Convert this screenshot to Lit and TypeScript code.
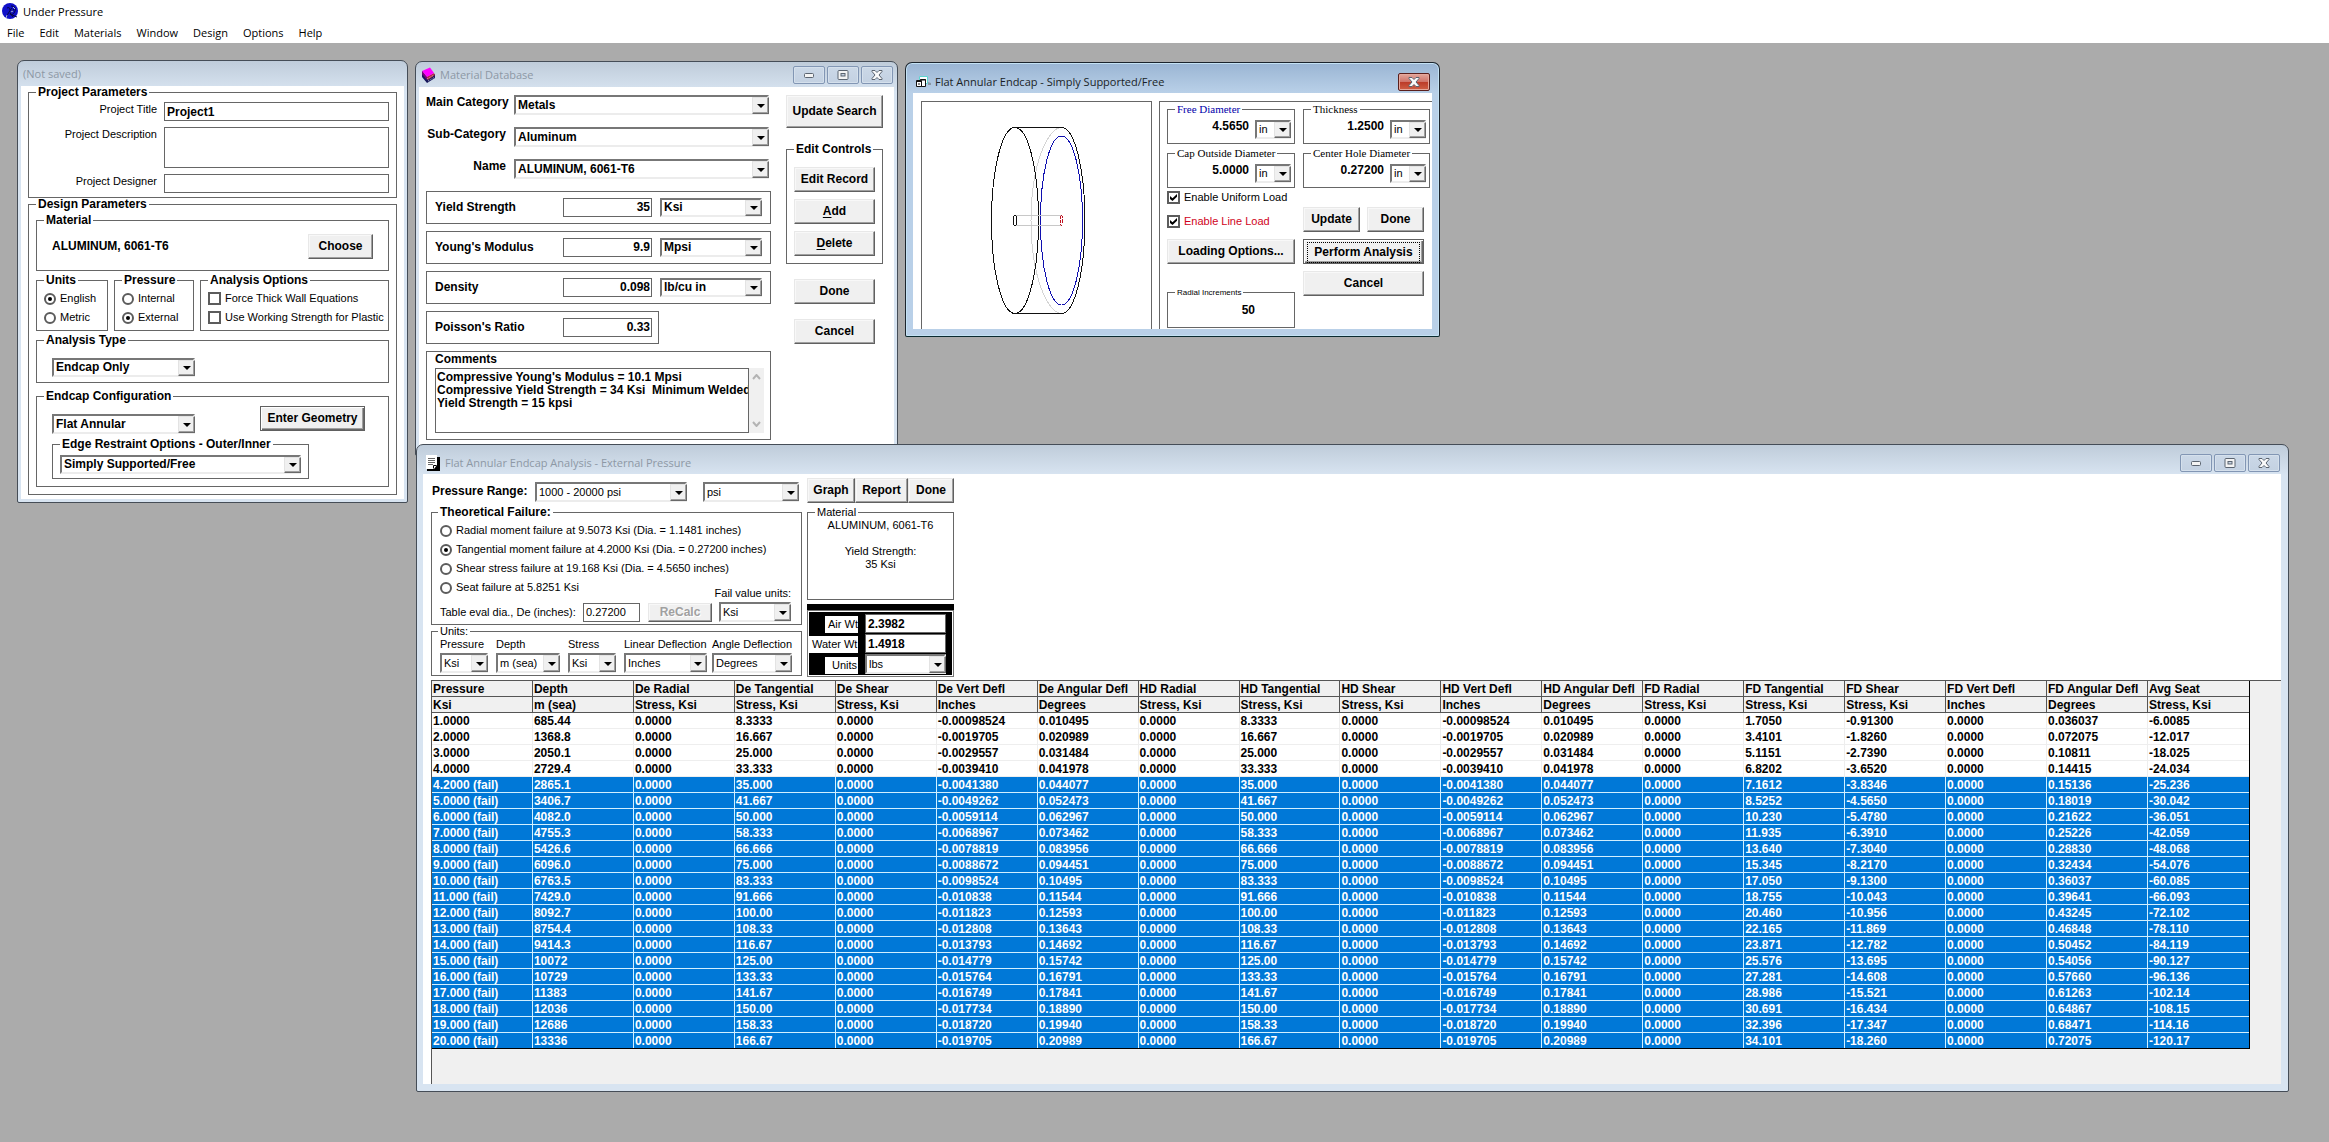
import { LitElement, html, css, svg, nothing } from "lit";
import { customElement } from "lit/decorators.js";
import { classMap } from "lit/directives/class-map.js";

/* ---------- shared look of the controls ---------- */

const controls = css`
  :host {
    display: block;
    font: 11px/13px "Liberation Sans", Arial, sans-serif;
    color: #000;
    cursor: default;
  }
  * { box-sizing: border-box; }
  .bold { font-weight: bold; font-size: 12px; }
  label, legend, .text { white-space: nowrap; }

  .win {
    border: 1px solid #454d57;
    border-radius: 7px 7px 2px 2px;
    background: linear-gradient(#bfccda, #d8e4f1 30px);
    padding: 0 3px 3px;
    overflow: hidden;
  }
  .body { background: #fff; }
  .bar {
    display: flex;
    align-items: center;
    gap: 4px;
    height: 25px;
    padding: 0 1px 0 2px;
    font: 11px/16px "Open Sans", "Noto Sans", sans-serif;
    color: #8d98a5;
    white-space: nowrap;
  }
  .bar .icon { display: block; width: 15px; height: 16px; flex: none; }
  .bar .name { flex: 1; }
  .sys { display: flex; gap: 2px; }
  .sys button {
    display: grid;
    place-items: center;
    width: 32px;
    height: 18px;
    padding: 0;
    border: 1px solid #8296b4;
    border-radius: 2px;
    background: linear-gradient(#cbd8e7, #c3d1e2);
    box-shadow: inset 0 0 0 1px #d5e0ec;
  }
  .sys svg { display: block; }
  .sys .close-red {
    border-color: #5a1f1c;
    background: linear-gradient(#e3a79c, #d0746a 48%, #bb3a28 50%, #cf6046);
    box-shadow: inset 0 0 0 1px #e6a89c;
  }

  fieldset {
    min-width: 0;
    margin: 0;
    padding: 0 7px;
    border: 1px solid #666;
  }
  legend {
    height: 13px;
    margin: 0;
    padding: 0 2px;
    font-weight: bold;
    font-size: 12px;
    line-height: 13px;
  }
  legend.light { font-weight: normal; font-size: 11px; }
  legend.serif {
    font: 11px/13px "Liberation Serif", "Times New Roman", serif;
  }
  legend.tiny { font-weight: normal; font-size: 8px; }
  legend.blue { color: #00a; }

  input.box, textarea {
    display: block;
    width: 100%;
    min-width: 0;
    height: 19px;
    margin: 0;
    padding: 0 2px;
    border: 1px solid #666;
    border-radius: 0;
    background: #fff;
    color: #000;
    font: bold 12px/13px "Liberation Sans", Arial, sans-serif;
    outline: none;
    resize: none;
    overflow: hidden;
  }
  input.light { font-weight: normal; font-size: 11px; }
  input.right { text-align: right; padding: 0 1px 2px; }
  input.bare { border: 0; height: 13px; padding: 0; text-align: right; }

  .combo { display: grid; position: relative; height: 20px; }
  .combo select {
    appearance: none;
    width: 100%;
    height: 100%;
    margin: 0;
    padding: 0 18px 0 2px;
    border: 2px solid;
    border-color: #777 #ececec #ececec #777;
    border-radius: 0;
    background: #fff;
    color: #000;
    font: 11px/13px "Liberation Sans", Arial, sans-serif;
    outline: none;
  }
  .combo.strong select { font-weight: bold; font-size: 12px; }
  .combo .drop {
    position: absolute;
    top: 2px;
    right: 0;
    bottom: 1px;
    width: 17px;
    display: grid;
    place-items: center;
    background: #f0f0f0;
    border: 1px solid;
    border-color: #e3e3e3 #696969 #696969 #e3e3e3;
    box-shadow: inset -1px -1px 0 #a0a0a0;
    pointer-events: none;
  }
  .combo .drop::before {
    content: "";
    border: solid transparent;
    border-width: 4px 4px 0;
    border-top-color: #000;
  }

  button.push {
    height: 25px;
    padding: 0 2px;
    border: 1px solid;
    border-color: #e8e8e8 #606060 #606060 #e8e8e8;
    border-radius: 0;
    background: #f0f0f0;
    box-shadow: inset -1px -1px 0 #a0a0a0, inset 1px 1px 0 #f8f8f8;
    color: #000;
    font: bold 12px/13px "Liberation Sans", Arial, sans-serif;
    white-space: nowrap;
  }
  button.default {
    border-color: #606060;
    box-shadow: inset 1px 1px 0 #fff, inset -1px -1px 0 #696969, inset -2px -2px 0 #a0a0a0;
  }
  button.focused { padding: 2px 3px; }
  button.focused span { display: block; margin: 0; padding: 3px 0; border: 1px dotted #000; }
  button:disabled { color: #a0a0a0; text-shadow: 1px 1px 0 #fff; }
  u { text-underline-offset: 2px; }

  .choice { display: flex; align-items: center; height: 19px; gap: 4px; }
  .choice input {
    appearance: none;
    display: grid;
    place-items: center;
    flex: none;
    width: 12px;
    height: 12px;
    margin: 0;
    border: 2px solid #5c5c5c;
    background: #fff;
  }
  .choice input[type="radio"] { border-radius: 50%; }
  .choice input[type="checkbox"] { width: 13px; height: 13px; }
  .choice input[type="radio"]:checked::before {
    content: "";
    width: 4px;
    height: 4px;
    border-radius: 50%;
    background: #000;
  }
  .choice input[type="checkbox"]:checked::before {
    content: "";
    width: 7px;
    height: 7px;
    background: #000;
    clip-path: polygon(0 30%, 36% 62%, 100% 0, 100% 40%, 36% 100%, 0 70%);
  }
  .red { color: #d0021b; }
`;

/* ---------- small builders ---------- */

const combo = (id: string, value: string, label: string, strong = false) => html`
  <span class=${classMap({ combo: true, strong })}>
    <select id=${id} aria-label=${label || nothing}><option>${value}</option></select>
    <span class="drop"></span>
  </span>`;

const choice = (type: string, name: string, text: string, checked = false, tone = "") => html`
  <label class="choice ${tone}"><input type=${type} name=${name} .checked=${checked} />${text}</label>`;

const minGlyph = html`<svg width="12" height="12" viewBox="0 0 12 12">
  <rect x="1.500" y="4.500" width="9" height="4" rx="1" fill="#f4f4f4" stroke="#5b6470" /></svg>`;
const maxGlyph = html`<svg width="12" height="12" viewBox="0 0 12 12">
  <rect x="1" y="1.500" width="10" height="9" rx="1" fill="#f4f4f4" stroke="#5b6470" />
  <rect x="4" y="4.500" width="4" height="2.500" fill="#c6d2e2" stroke="#5b6470" /></svg>`;
const closeGlyph = html`<svg width="12" height="12" viewBox="0 0 12 12">
  <path d="M1 1.500h3l2 2 2-2h3v1L8 6l3 3.500v1H8l-2-2-2 2H1v-1L4 6 1 2.500z" fill="#fafafa" stroke="#5b6470" stroke-linejoin="round" /></svg>`;

const systemButtons = html`<span class="sys">
  <button aria-label="Minimize">${minGlyph}</button>
  <button aria-label="Maximize">${maxGlyph}</button>
  <button aria-label="Close">${closeGlyph}</button>
</span>`;

/* ---------- project window ---------- */

@customElement("project-window")
class ProjectWindow extends LitElement {
  static styles = [controls, css`
    .body { padding: 0 7px 4px; }
    .project { display: grid; grid-template-columns: 1fr 225px; gap: 6px 7px; padding: 3px 0 4px; }
    .project label { text-align: right; line-height: 15px; }
    .project textarea { height: 41px; }
    .design { padding: 3px 7px 7px; }
    .material { display: flex; align-items: center; justify-content: space-between; padding: 7px 8px 11px; }
    .material button { width: 65px; }
    .trio { display: grid; grid-template-columns: 72px 80px 1fr; gap: 6px; margin: 3px 0; }
    .trio fieldset { padding: 2px 7px 3px; }
    .analysis { padding: 11px 7px 5px; }
    .narrow { width: 143px; }
    .analysis .narrow { margin-left: 8px; }
    .analysis .combo { height: 19px; }
    .config { margin-top: 7px; padding: 3px 7px 7px; }
    .line { display: flex; justify-content: space-between; align-items: flex-end; height: 28px; padding: 0 16px 0 8px; }
    .line button { width: 105px; align-self: flex-start; }
    .edge { width: 257px; margin: 4px 0 0 8px; padding: 4px 7px; }
    .edge .combo { height: 19px; }
  `];
  render() {
    return html`<section class="win">
      <div class="bar"><span class="name">(Not saved)</span></div>
      <div class="body">
        <fieldset><legend>Project Parameters</legend>
          <div class="project">
            <label for="title">Project Title</label><input id="title" class="box" value="Project1" />
            <label for="desc">Project Description</label><textarea id="desc"></textarea>
            <label for="designer">Project Designer</label><input id="designer" class="box" />
          </div>
        </fieldset>
        <fieldset class="design"><legend>Design Parameters</legend>
          <fieldset><legend>Material</legend>
            <div class="material"><span class="bold text">ALUMINUM, 6061-T6</span><button class="push">Choose</button></div>
          </fieldset>
          <div class="trio">
            <fieldset><legend>Units</legend>
              ${choice("radio", "units", "English", true)}${choice("radio", "units", "Metric")}
            </fieldset>
            <fieldset><legend>Pressure</legend>
              ${choice("radio", "side", "Internal")}${choice("radio", "side", "External", true)}
            </fieldset>
            <fieldset><legend>Analysis Options</legend>
              ${choice("checkbox", "thick", "Force Thick Wall Equations")}
              ${choice("checkbox", "working", "Use Working Strength for Plastic")}
            </fieldset>
          </div>
          <fieldset class="analysis"><legend>Analysis Type</legend>
            <div class="narrow">${combo("type", "Endcap Only", "Analysis Type", true)}</div>
          </fieldset>
          <fieldset class="config"><legend>Endcap Configuration</legend>
            <div class="line"><div class="narrow">${combo("config", "Flat Annular", "Endcap Configuration", true)}</div>
              <button class="push default">Enter Geometry</button></div>
            <fieldset class="edge"><legend>Edge Restraint Options - Outer/Inner</legend>
              ${combo("edge", "Simply Supported/Free", "Edge Restraint Options", true)}
            </fieldset>
          </fieldset>
        </fieldset>
      </div>
    </section>`;
  }
}

/* ---------- material database ---------- */

@customElement("material-window")
class MaterialWindow extends LitElement {
  static styles = [controls, css`
    .body { display: grid; grid-template-columns: minmax(0, 1fr) 97px; gap: 15px; padding: 8px 11px 12px 7px; }
    .lookup { display: grid; grid-template-columns: minmax(0, 1fr) 255px; gap: 12px 8px; padding-right: 2px; margin-bottom: 12px; }
    .lookup label { text-align: right; line-height: 15px; }
    .prop {
      display: grid;
      grid-template-columns: minmax(0, 1fr) 89px 102px;
      align-items: center;
      gap: 8px;
      height: 33px;
      margin-bottom: 7px;
      padding: 0 8px;
      border: 1px solid #666;
    }
    .prop.short { grid-template-columns: minmax(0, 1fr) 89px; width: 233px; padding-right: 6px; }
    .prop .combo { height: 19px; }
    .notes { padding: 1px 6px 6px 8px; border: 1px solid #666; }
    .area { display: flex; margin-top: 2px; }
    .area textarea { flex: 1; height: 65px; padding: 2px 0 2px 1px; white-space: pre; }
    .scroll { display: flex; flex: none; flex-direction: column; justify-content: space-between; align-items: center; width: 15px; padding: 6px 0; background: #f0f0f0; }
    .side { display: flex; flex-direction: column; gap: 15px; }
    .side > .push { margin: 0 8px; }
    .side > .wide { margin: 0; height: 33px; }
    .edit { display: grid; gap: 7px; padding: 11px 0 7px; }
  `];
  render() {
    const props = [
      ["yield", "Yield Strength", "35", "Ksi"],
      ["young", "Young's Modulus", "9.9", "Mpsi"],
      ["density", "Density", "0.098", "lb/cu in"],
    ];
    const lookups = [
      ["main", "Main Category", "Metals"],
      ["sub", "Sub-Category", "Aluminum"],
      ["name", "Name", "ALUMINUM, 6061-T6"],
    ];
    return html`<section class="win">
      <div class="bar">
        <svg class="icon" viewBox="0 0 15 16">
          <path d="M1 4v6l5 6 8-5V7L6 11z" fill="#15155a" />
          <path d="M5 10l8-4 1 2-7 5z" fill="#b02848" />
          <path d="M6 12l7-4M7 14l7-4" stroke="#e8e0e0" stroke-width=".7" stroke-dasharray="1 1" />
          <path d="M1 4l8-3.500L13 6l-7 4z" fill="#f0f" />
          <path d="M1 4l5 6v3L1 7z" fill="#7a0078" />
        </svg>
        <span class="name">Material Database</span>${systemButtons}
      </div>
      <div class="body">
        <div>
          <div class="lookup">
            ${lookups.map(([id, label, value]) => html`<label class="bold" for=${id}>${label}</label>${combo(id, value, "", true)}`)}
          </div>
          ${props.map(([id, label, value, unit]) => html`<div class="prop">
            <label class="bold" for=${id}>${label}</label>
            <input id=${id} class="box right" value=${value} />${combo(id + "-unit", unit, label + " units", true)}
          </div>`)}
          <div class="prop short"><label class="bold" for="poisson">Poisson's Ratio</label><input id="poisson" class="box right" value="0.33" /></div>
          <div class="notes"><label class="bold" for="comments">Comments</label>
            <div class="area">
              <textarea id="comments" .value=${"Compressive Young's Modulus = 10.1 Mpsi\nCompressive Yield Strength = 34 Ksi  Minimum Welded\nYield Strength = 15 kpsi"}></textarea>
              <span class="scroll">
                <svg width="9" height="6" viewBox="0 0 9 6"><path d="M1 5l3.500-4L8 5" fill="none" stroke="#b4b4b4" stroke-width="2" /></svg>
                <svg width="9" height="6" viewBox="0 0 9 6"><path d="M1 1l3.500 4L8 1" fill="none" stroke="#b4b4b4" stroke-width="2" /></svg>
              </span>
            </div>
          </div>
        </div>
        <div class="side">
          <button class="push wide">Update Search</button>
          <fieldset><legend>Edit Controls</legend>
            <div class="edit">
              <button class="push">Edit Record</button>
              <button class="push"><u>A</u>dd</button>
              <button class="push"><u>D</u>elete</button>
            </div>
          </fieldset>
          <button class="push">Done</button>
          <button class="push">Cancel</button>
        </div>
      </div>
    </section>`;
  }
}

/* ---------- endcap geometry ---------- */

@customElement("endcap-window")
class EndcapWindow extends LitElement {
  static styles = [controls, css`
    .win {
      padding: 0 7px 7px;
      border-color: #1c242c;
      border-bottom-color: #0a2a30;
      background: linear-gradient(#9ab5d3, #b9d0e8 30px);
      box-shadow: inset 0 0 0 1px #c4e2f4;
    }
    .bar { height: 30px; padding: 8px 2px 0 3px; color: #1a1f26; }
    .bar .sys svg { width: 12px; height: 12px; }
    .body { display: grid; grid-template-columns: 231px 1fr; gap: 7px; height: 236px; padding: 8px 0 0 8px; overflow: hidden; }
    .view { border: solid #666; border-width: 1px 1px 0; }
    .view svg { display: block; }
    .panel { display: grid; grid-template-columns: 128px 127px; align-content: start; align-items: start; gap: 8px; padding: 1px 0 0 7px; border: solid #666; border-width: 1px 0 0 1px; }
    .col { display: flex; flex-direction: column; }
    .dim { margin-bottom: 3px; padding: 4px 3px; }
    .dim legend { margin-left: 4px; }
    .dim-row { display: grid; grid-template-columns: 1fr 36px; gap: 6px; }
    .dim .combo { height: 19px; }
    .dim .combo select { padding-right: 16px; }
    .checks { display: grid; gap: 5px; margin: -3px 0 8px; }
    .radial { height: 42px; margin-top: 22px; }
    .radial .bare { width: 80px; margin-top: 5px; }
    .actions { display: grid; grid-template-columns: 57px 57px; gap: 7px; padding-top: 16px; }
    .actions .wide { grid-column: span 2; }
  `];
  private dim(id: string, label: string, value: string, tone = "") {
    return html`<fieldset class="dim"><legend class="serif ${tone}">${label}</legend>
      <div class="dim-row"><input class="box bare" aria-label=${label} .value=${value} />${combo(id, "in", label + " units")}</div>
    </fieldset>`;
  }
  render() {
    return html`<section class="win">
      <div class="bar">
        <svg class="icon" viewBox="0 0 15 16">
          <path d="M3.500 2.500h8v7h-8z" fill="#fff" stroke="#5fd6d0" />
          <path d="M12 8l3 1v2h-3z" fill="#8a97a5" />
          <path d="M4.500 5.500h5v7h-5z" fill="#fff" stroke="#111" />
          <path d="M.5 6.500h5v6h-5z" fill="#fff" stroke="#111" />
          <path d="M0 7.500h6M4 6h6M2 10h2" stroke="#111" />
        </svg>
        <span class="name">Flat Annular Endcap - Simply Supported/Free</span>
        <span class="sys"><button class="close-red" aria-label="Close">${closeGlyph}</button></span>
      </div>
      <div class="body">
        <div class="view">
          <svg width="229" height="227" viewBox="0 0 229 227" fill="none" shape-rendering="crispEdges">
            ${svg`
              <path d="M139.500 25.500C126 25.500 109 62 109 118.500S126 211.500 139.500 211.500" stroke="#d4d4d4" />
              <ellipse cx="93" cy="118.500" rx="23.500" ry="93" stroke="#111" />
              <path d="M93 25.500h46.500a23.500 93 0 0 1 0 186H93" stroke="#111" />
              <ellipse cx="139.500" cy="118.500" rx="21" ry="84.500" stroke="#1010b0" />
              <path d="M93 113.500h46.500M93 123.500h46.500" stroke="#c8c8c8" />
              <ellipse cx="93" cy="118.500" rx="1.500" ry="5" stroke="#111" />
              <ellipse cx="139.500" cy="118.500" rx="1.500" ry="5" stroke="#c01020" stroke-dasharray="3 1" />
            `}
          </svg>
        </div>
        <div class="panel">
          <div class="col">
            ${this.dim("free", "Free Diameter", "4.5650", "blue")}
            ${this.dim("outside", "Cap Outside Diameter", "5.0000")}
            <div class="checks">
              ${choice("checkbox", "uniform", "Enable Uniform Load", true)}
              ${choice("checkbox", "line", "Enable Line Load", true, "red")}
            </div>
            <button class="push">Loading Options...</button>
            <fieldset class="radial"><legend class="tiny">Radial Increments</legend>
              <input class="box bare" aria-label="Radial Increments" value="50" />
            </fieldset>
          </div>
          <div class="col">
            ${this.dim("thick", "Thickness", "1.2500")}
            ${this.dim("hole", "Center Hole Diameter", "0.27200")}
            <div class="actions">
              <button class="push">Update</button><button class="push">Done</button>
              <button class="push default focused wide"><span>Perform Analysis</span></button>
              <button class="push wide">Cancel</button>
            </div>
          </div>
        </div>
      </div>
    </section>`;
  }
}

/* ---------- analysis results ---------- */

const HEADS = [
  ["Pressure", "Ksi"], ["Depth", "m (sea)"],
  ...["De", "HD", "FD"].flatMap((p) => [
    [p + " Radial", "Stress, Ksi"], [p + " Tangential", "Stress, Ksi"], [p + " Shear", "Stress, Ksi"],
    [p + " Vert Defl", "Inches"], [p + " Angular Defl", "Degrees"],
  ]),
  ["Avg Seat", "Stress, Ksi"],
];

/* pressure, depth, tangential, vertical, angular, FD tangential, FD shear, FD angular, seat */
const RESULTS = `
1.0000|685.44|8.3333|-0.00098524|0.010495|1.7050|-0.91300|0.036037|-6.0085
2.0000|1368.8|16.667|-0.0019705|0.020989|3.4101|-1.8260|0.072075|-12.017
3.0000|2050.1|25.000|-0.0029557|0.031484|5.1151|-2.7390|0.10811|-18.025
4.0000|2729.4|33.333|-0.0039410|0.041978|6.8202|-3.6520|0.14415|-24.034
4.2000|2865.1|35.000|-0.0041380|0.044077|7.1612|-3.8346|0.15136|-25.236
5.0000|3406.7|41.667|-0.0049262|0.052473|8.5252|-4.5650|0.18019|-30.042
6.0000|4082.0|50.000|-0.0059114|0.062967|10.230|-5.4780|0.21622|-36.051
7.0000|4755.3|58.333|-0.0068967|0.073462|11.935|-6.3910|0.25226|-42.059
8.0000|5426.6|66.666|-0.0078819|0.083956|13.640|-7.3040|0.28830|-48.068
9.0000|6096.0|75.000|-0.0088672|0.094451|15.345|-8.2170|0.32434|-54.076
10.000|6763.5|83.333|-0.0098524|0.10495|17.050|-9.1300|0.36037|-60.085
11.000|7429.0|91.666|-0.010838|0.11544|18.755|-10.043|0.39641|-66.093
12.000|8092.7|100.00|-0.011823|0.12593|20.460|-10.956|0.43245|-72.102
13.000|8754.4|108.33|-0.012808|0.13643|22.165|-11.869|0.46848|-78.110
14.000|9414.3|116.67|-0.013793|0.14692|23.871|-12.782|0.50452|-84.119
15.000|10072|125.00|-0.014779|0.15742|25.576|-13.695|0.54056|-90.127
16.000|10729|133.33|-0.015764|0.16791|27.281|-14.608|0.57660|-96.136
17.000|11383|141.67|-0.016749|0.17841|28.986|-15.521|0.61263|-102.14
18.000|12036|150.00|-0.017734|0.18890|30.691|-16.434|0.64867|-108.15
19.000|12686|158.33|-0.018720|0.19940|32.396|-17.347|0.68471|-114.16
20.000|13336|166.67|-0.019705|0.20989|34.101|-18.260|0.72075|-120.17
`.trim().split("\n").map((line) => line.split("|"));

const FAIL_AT = 4.2;
const ZERO = "0.0000";

@customElement("results-window")
class ResultsWindow extends LitElement {
  static styles = [controls, css`
    .win { padding: 0 7px 7px 6px; }
    .bar { height: 29px; padding: 7px 1px 0 3px; }
    .body { padding-left: 8px; }
    .top { display: grid; grid-template-columns: 371px 147px; gap: 5px; margin-bottom: 3px; }
    .range { display: grid; grid-template-columns: 1fr 152px 96px; gap: 16px; margin-bottom: 4px; padding: 8px 3px 0 1px; }
    .range .first { margin-right: -14px; line-height: 18px; }
    .failure { display: grid; grid-template-columns: minmax(0, 1fr) 72px; gap: 2px 7px; padding: 2px 10px 2px 8px; }
    .list { padding-bottom: 3px; }
    .units-label { align-self: end; justify-self: end; }
    .recalc { display: grid; grid-template-columns: minmax(0, 1fr) 57px 64px; align-items: center; gap: 8px; }
    .recalc button { height: 19px; }
    .plain { padding: 0; }
    .indent { margin-left: 6px; }
    .units { display: grid; grid-template-columns: 48px 64px 48px 80px 80px; gap: 2px 8px; padding: 0 8px 2px; }
    .units .unit { display: grid; gap: 2px; }
    .cmds { display: grid; grid-template-columns: 48px 53px 1fr; margin: 4px 0 3px; }
    .mat { height: 94px; padding: 0 4px; text-align: center; white-space: pre-line; }
    .mat legend { margin: 0 auto 0 3px; }
    .cap { height: 6px; margin-top: 4px; background: #000; }
    .weights {
      display: grid;
      grid-template-columns: 49px 81px;
      justify-content: start;
      gap: 1px 7px;
      padding: 3px 6px 2px 1px;
      border: 1px solid #777;
      background: #000;
      box-shadow: inset 0 0 0 1px #fff;
    }
    .weights label { display: block; justify-self: end; align-self: end; width: 33px; height: 17px; padding: 2px 0 0 3px; background: #fff; overflow: hidden; }
    .weights label.long { width: 49px; }
    .weights .units-tag { padding-left: 7px; }
    .grid { padding-bottom: 35px; border: solid #555; border-width: 1px 0 0 1px; background: #f0f0f0; }
    table { width: calc(100% - 31px); table-layout: fixed; border-spacing: 0; border-right: 1px solid #000; border-bottom: 1px solid #000; background: #fff; }
    th, td {
      height: 16px;
      padding: 1px 0 0 1px;
      border: solid #eee;
      border-width: 0 1px 1px 0;
      text-align: left;
      font: bold 12px/14px "Liberation Sans", Arial, sans-serif;
      white-space: nowrap;
      overflow: hidden;
    }
    th { background: #f0f0f0; border-color: #555; }
    .fail td { background: #0078d7; border-color: #d2f0ff; color: #fff; }
    tr > :last-child { border-right: 0; }
    tbody tr:last-child td { border-bottom: 0; line-height: 14px; height: 15px; }
  `];
  render() {
    const modes: [string, boolean][] = [
      ["Radial moment failure at 9.5073 Ksi (Dia. = 1.1481 inches)", false],
      ["Tangential moment failure at 4.2000 Ksi (Dia. = 0.27200 inches)", true],
      ["Shear stress failure at 19.168 Ksi (Dia. = 4.5650 inches)", false],
      ["Seat failure at 5.8251 Ksi", false],
    ];
    const units = [
      ["u-pressure", "Pressure", "Ksi"], ["u-depth", "Depth", "m (sea)"], ["u-stress", "Stress", "Ksi"],
      ["u-linear", "Linear Deflection", "Inches"], ["u-angle", "Angle Deflection", "Degrees"],
    ];
    return html`<section class="win">
      <div class="bar">
        <svg class="icon" viewBox="0 0 15 16">
          <path d="M3 2h11v14H1v-2h2z" fill="#000" />
          <path d="M0 0h11v10l-3 4H0z" fill="#fff" />
          <path d="M2 3.500h7M2 5.500h7M2 7.500h7M2 9.500h5" stroke="#666" />
          <path d="M7.500 13.500v-3h3" fill="none" stroke="#000" />
        </svg>
        <span class="name">Flat Annular Endcap Analysis - External Pressure</span>${systemButtons}
      </div>
      <div class="body">
        <div class="top">
          <div>
            <div class="range">
              <label class="bold first" for="range">Pressure Range:</label>
              ${combo("range", "1000 - 20000 psi", "")}${combo("range-unit", "psi", "Pressure Range units")}
            </div>
            <fieldset class="plain"><legend class="indent">Theoretical Failure:</legend>
              <div class="failure">
                <div class="list">${modes.map(([t, on]) => choice("radio", "mode", t, on))}</div>
                <label class="units-label" for="fail-unit">Fail value units:</label>
                <div class="recalc">
                  <label for="eval">Table eval dia., De (inches):</label>
                  <input id="eval" class="box light" value="0.27200" />
                  <button class="push" disabled>ReCalc</button>
                </div>
                ${combo("fail-unit", "Ksi", "")}
              </div>
            </fieldset>
            <fieldset class="plain"><legend class="light indent">Units:</legend>
              <div class="units">
                ${units.map(([id, label, value]) => html`<div class="unit"><label for=${id}>${label}</label>${combo(id, value, "")}</div>`)}
              </div>
            </fieldset>
          </div>
          <div>
            <div class="cmds"><button class="push">Graph</button><button class="push">Report</button><button class="push">Done</button></div>
            <fieldset class="mat"><legend class="light">Material</legend>ALUMINUM, 6061-T6

Yield Strength:
35 Ksi</fieldset>
            <div class="cap"></div>
            <div class="weights">
              <label for="air">Air Wt</label><input id="air" class="box" value="2.3982" />
              <label class="long" for="water">Water Wt</label><input id="water" class="box" value="1.4918" />
              <label class="units-tag" for="wt-unit">Units</label>${combo("wt-unit", "lbs", "")}
            </div>
          </div>
        </div>
        <div class="grid">
          <table>
            <thead>
              <tr>${HEADS.map(([name]) => html`<th scope="col">${name}</th>`)}</tr>
              <tr>${HEADS.map(([, unit]) => html`<th scope="col">${unit}</th>`)}</tr>
            </thead>
            <tbody>
              ${RESULTS.map(([p, depth, tan, vert, ang, fTan, fShear, fAng, seat]) => {
                const fail = parseFloat(p) >= FAIL_AT;
                const cells = [
                  fail ? p + " (fail)" : p, depth,
                  ZERO, tan, ZERO, vert, ang,
                  ZERO, tan, ZERO, vert, ang,
                  ZERO, fTan, fShear, ZERO, fAng, seat,
                ];
                return html`<tr class=${classMap({ fail })}>${cells.map((c) => html`<td>${c}</td>`)}</tr>`;
              })}
            </tbody>
          </table>
        </div>
      </div>
    </section>`;
  }
}

/* ---------- application frame ---------- */

@customElement("app-root")
class AppRoot extends LitElement {
  static styles = css`
    :host {
      display: flex;
      flex-direction: column;
      min-height: 100vh;
      background: #ababab;
      font: 11px/17px "Open Sans", "Noto Sans", sans-serif;
      color: #000;
      cursor: default;
    }
    header { background: #fff; height: 43px; }
    .title { display: flex; align-items: center; gap: 4px; height: 23px; padding-left: 2px; }
    nav { display: flex; gap: 15px; height: 20px; padding-left: 7px; }
    nav a { color: inherit; text-decoration: none; line-height: 19px; }
    main { position: relative; flex: 1; }
    main > * { position: absolute; }
    project-window { left: 17px; top: 17px; width: 391px; }
    material-window { left: 415px; top: 18px; width: 483px; }
    endcap-window { left: 905px; top: 19px; width: 535px; }
    results-window { left: 416px; top: 401px; right: 40px; min-width: 1100px; }
  `;
  render() {
    return html`
      <header>
        <div class="title">
          <svg width="17" height="17" viewBox="0 0 17 17">
            <circle cx="8" cy="8" r="8" fill="#1010c8" />
            <path d="M9 3c3 0 5 2 4 5s-3 4-4 3M10 5c-2 2-4 6-6 9M8 10l3 4M12 6l-4 5 7 3M5 5c2-1 3 0 3 2" fill="none" stroke="#06063c" />
            <path d="M11 4l2 2M9 9l2-1M5 12l-1 3" stroke="#a8b4e8" />
          </svg>
          <span>Under Pressure</span>
        </div>
        <nav>${["File", "Edit", "Materials", "Window", "Design", "Options", "Help"].map((m) => html`<a href="#">${m}</a>`)}</nav>
      </header>
      <main>
        <project-window></project-window>
        <material-window></material-window>
        <endcap-window></endcap-window>
        <results-window></results-window>
      </main>`;
  }
}
